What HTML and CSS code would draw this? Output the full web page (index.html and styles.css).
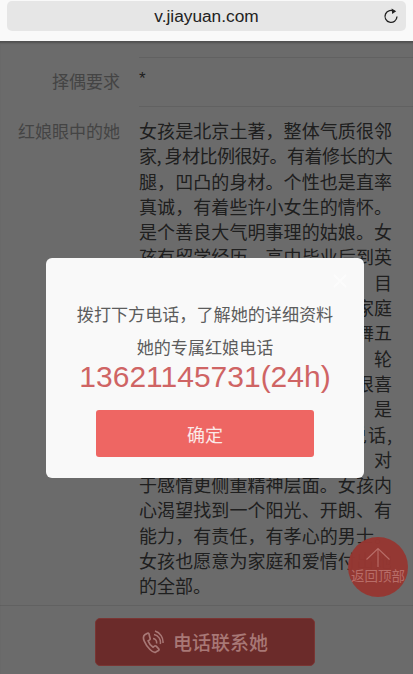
FILE: index.html
```html
<!DOCTYPE html>
<html lang="zh-CN">
<head>
<meta charset="utf-8">
<title>v.jiayuan.com</title>
<link rel="stylesheet" href="styles.css">
</head>
<body>
<header class="browser">
  <div class="address">
    <span class="url">v.jiayuan.com</span>
    <svg class="reload" viewBox="0 0 16 16" width="16" height="16" aria-hidden="true">
      <path d="M11.6 3.6A6 6 0 1 0 14 8.6" fill="none" stroke="#222" stroke-width="1.3"/>
      <path d="M8.6 .6l4.6 2.7-4 2.8z" fill="#222"/>
    </svg>
  </div>
</header>
<main class="page">
  <div class="profile">
    <div class="row row-stub"><div></div><div class="value"></div></div>
    <div class="row row-short">
      <div class="label">择偶要求</div>
      <div class="value star">*</div>
    </div>
    <div class="row row-bio">
      <div class="label">红娘眼中的她</div>
      <div class="bio">
        <p class="line">女孩是北京土著，整体气质很邻</p>
        <p class="line line-tight">家, 身材比例很好。有着修长的大</p>
        <p class="line">腿，凹凸的身材。个性也是直率</p>
        <p class="line">真诚，有着些许小女生的情怀。</p>
        <p class="line">是个善良大气明事理的姑娘。女</p>
        <p class="line">孩有留学经历，高中毕业后到英</p>
        <p class="line">国读书，回国后工作很稳定　目</p>
        <p class="line">标，对生活很有规划，她的家庭</p>
        <p class="line">条件优越，从小就学习古典舞五</p>
        <p class="line">年，气质出众，平时爱瑜伽　轮</p>
        <p class="line">滑和旅行，性格开朗，她也很喜</p>
        <p class="line">欢小动物，工作上也很努力　是</p>
        <p class="line">大家眼中的好同事，很会说话,</p>
        <p class="line">总是温柔有分寸，待人真诚　对</p>
        <p class="line">于感情更侧重精神层面。女孩内</p>
        <p class="line">心渴望找到一个阳光、开朗、有</p>
        <p class="line">能力，有责任，有孝心的男士。</p>
        <p class="line">女孩也愿意为家庭和爱情付出她</p>
        <p class="line line-end">的全部。</p>
      </div>
    </div>
  </div>
  <footer class="contact">
    <a class="call">
      <svg class="phone" viewBox="0 0 22 24" width="22" height="24" aria-hidden="true">
        <path d="M5.5 3.2 2.8 4.8C1.200 6 1.200 8.500 2.200 11c1.200 3 3.300 6 5.800 8.500 2 2 4.200 3.200 5.800 2.600l2.700-1.500c.7-.5.7-1.200.2-1.800l-2.500-2.600c-.6-.5-1.200-.5-1.800 0l-1.300 1c-1.700-1-4.300-4.300-5-6.400l1.500-.9c.6-.5.7-1.100.4-1.700L6.900 3.600c-.4-.6-.9-.7-1.400-.4z" fill="none" stroke="currentColor" stroke-width="1.700"/>
        <path d="M11 8.500a4 4 0 0 1 3.500 5M12 4.500a8 8 0 0 1 6.300 9.500M13 1a11.500 11.500 0 0 1 8 12" fill="none" stroke="currentColor" stroke-width="1.500"/>
      </svg>
      <span>电话联系她</span>
    </a>
  </footer>
  <div class="overlay"></div>
  <section class="modal">
    <svg class="modal-close" viewBox="0 0 14 14" width="14" height="14" aria-hidden="true">
      <path d="M1 1l12 12M13 1 1 13" fill="none" stroke="#fcfcfc" stroke-width="2"/>
    </svg>
    <p class="modal-text">拨打下方电话，了解她的详细资料</p>
    <p class="modal-text">她的专属红娘电话</p>
    <p class="modal-phone">13621145731(24h)</p>
    <button class="modal-ok" type="button">确定</button>
  </section>
  <a class="to-top">
    <svg viewBox="0 0 26 20" width="26" height="20" aria-hidden="true">
      <path d="M13 20V1.500M1.500 12.500 13 1.500l11.500 11" fill="none" stroke="currentColor" stroke-width="1.100"/>
    </svg>
    <span>返回顶部</span>
  </a>
</main>
</body>
</html>
```

FILE: styles.css
```css
* { box-sizing: border-box; }
html, body { margin: 0; height: 100%; }
body {
  width: 413px;
  height: 674px;
  overflow: hidden;
  display: flex;
  flex-direction: column;
  background: #fff;
  font-family: "Noto Sans CJK SC", "Liberation Sans", sans-serif;
}
.browser {
  height: 41px;
  flex: none;
  background: #f9f9f9;
  padding: 1px 7px 0;
  position: relative;
  z-index: 5;
}
.address {
  height: 30px;
  background: #e6e6e6;
  border-radius: 5px;
  position: relative;
  display: flex;
  align-items: center;
  justify-content: center;
}
.url {
  font-family: "Liberation Sans", sans-serif;
  font-size: 17.300px;
  color: #222;
}
.reload { position: absolute; right: 7px; top: 7px; }
.page {
  position: relative;
  flex: 1;
  min-height: 0;
  overflow: hidden;
}
.row {
  display: grid;
  grid-template-columns: 120px 1fr;
  column-gap: 19px;
}
.row-stub { height: 17px; }
.row-stub .value { border-bottom: 1px solid #e6e6e6; }
.row-short { height: 49px; }
.row-short .value { border-bottom: 1px solid #e6e6e6; }
.label {
  text-align: right;
  font-size: 17px;
  line-height: 25px;
  color: #a3a3a3;
}
.row-short .label { padding-top: 10px; }
.star {
  font-family: "Liberation Sans", sans-serif;
  font-size: 17px;
  line-height: 25px;
  padding-top: 8px;
  color: #4a4a4a;
}
.row-bio { padding: 11px 0 6px; }
.row-bio .label { line-height: 25.300px; }
.bio {
  padding-right: 21px;
  font-size: 18px;
  line-height: 25.300px;
  color: #4a4a4a;
}
.line {
  margin: 0;
  height: 25.300px;
  white-space: nowrap;
  text-align: justify;
  text-align-last: justify;
}
.line-tight { letter-spacing: -.65px; }
.line-end { text-align-last: left; }
.contact {
  border-top: 1px solid #e6e6e6;
  padding: 12px 3px 0 0;
  display: flex;
  justify-content: center;
}
.call {
  position: relative;
  z-index: 1;
  width: 220px;
  height: 48px;
  border-radius: 5px;
  background: #6b2b2a;
  border: 1px solid #7a3533;
  color: #a87876;
  display: flex;
  align-items: center;
  justify-content: center;
  gap: 9px;
  font-size: 19px;
  font-weight: 500;
}
.overlay {
  position: absolute;
  inset: 0;
  background: rgba(0, 0, 0, .58);
  box-shadow: inset 0 3px 2px -1px rgba(0, 0, 0, .25);
}
.modal {
  position: absolute;
  left: 46px;
  top: 217px;
  width: 318px;
  height: 220px;
  padding: 39px 18px 0;
  border-radius: 6px;
  background: #f9f9f9;
  display: flex;
  flex-direction: column;
  align-items: center;
}
.modal-close { position: absolute; right: 17px; top: 16px; }
.modal-text {
  margin: 0;
  font-size: 17.100px;
  line-height: 33px;
  color: #5c5c5c;
  white-space: nowrap;
}
.modal-phone {
  margin: -1px 0 0;
  font-family: "Liberation Sans", sans-serif;
  font-size: 30px;
  line-height: 30px;
  color: #cf6464;
  white-space: nowrap;
}
.modal-ok {
  margin-top: 18px;
  width: 218px;
  height: 47px;
  flex: none;
  border: 0;
  border-radius: 3px;
  background: #ee6663;
  color: #fbe9e8;
  font-family: inherit;
  font-size: 18px;
}
.to-top {
  position: absolute;
  left: 348px;
  top: 496px;
  width: 60px;
  height: 60px;
  border-radius: 50%;
  background: rgba(150, 55, 50, .97);
  color: #b86d68;
  display: flex;
  flex-direction: column;
  align-items: center;
  padding-top: 10px;
  font-size: 13.500px;
  line-height: 17px;
  white-space: nowrap;
}
```
